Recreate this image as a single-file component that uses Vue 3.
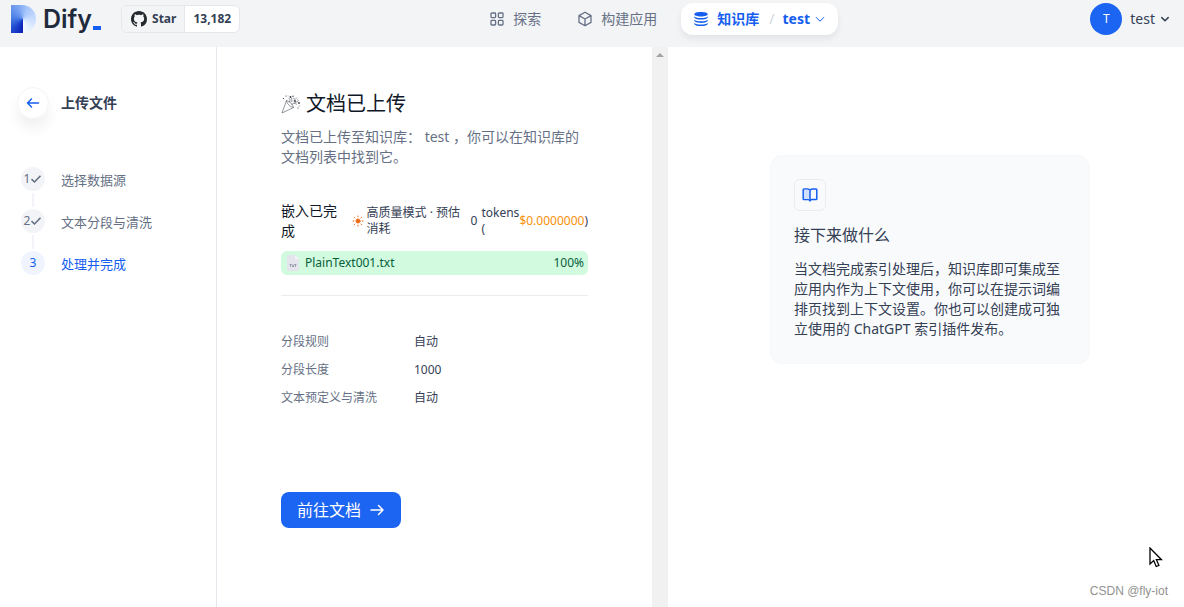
<script setup>
const steps = [
  { n: 1, label: '选择数据源', done: true },
  { n: 2, label: '文本分段与清洗', done: true },
  { n: 3, label: '处理并完成', done: false },
]
const rules = [
  { name: '分段规则', value: '自动' },
  { name: '分段长度', value: '1000' },
  { name: '文本预定义与清洗', value: '自动' },
]
</script>

<template>
  <div class="page">
    <header class="header">
      <div class="brand">
        <a class="logo" href="#" aria-label="Dify">
          <span class="logo-mark"></span>
          <span class="logo-text">Dify</span>
          <span class="logo-dash"></span>
        </a>
        <a class="github" href="#">
          <span class="gh-star">
            <svg width="16" height="16" viewBox="0 0 16 16" fill="#24292f"><path d="M8 0C3.58 0 0 3.58 0 8c0 3.54 2.29 6.53 5.47 7.59.4.07.55-.17.55-.38 0-.19-.01-.82-.01-1.49-2.01.37-2.53-.49-2.69-.94-.09-.23-.48-.94-.82-1.13-.28-.15-.68-.52-.01-.53.63-.01 1.08.58 1.23.82.72 1.21 1.87.87 2.33.66.07-.52.28-.87.51-1.07-1.78-.2-3.64-.89-3.64-3.95 0-.87.31-1.59.82-2.15-.08-.2-.36-1.02.08-2.12 0 0 .67-.21 2.2.82.64-.18 1.32-.27 2-.27s1.36.09 2 .27c1.53-1.04 2.2-.82 2.2-.82.44 1.1.16 1.92.08 2.12.51.56.82 1.27.82 2.15 0 3.07-1.87 3.75-3.65 3.95.29.25.54.73.54 1.48 0 1.07-.01 1.93-.01 2.2 0 .21.15.46.55.38A8.01 8.01 0 0 0 16 8c0-4.42-3.58-8-8-8z" /></svg>
            Star
          </span>
          <span class="gh-count">13,182</span>
        </a>
      </div>

      <nav class="nav">
        <a class="nav-item" href="#">
          <svg width="16" height="16" viewBox="0 0 16 16" fill="none" stroke="currentColor" stroke-width="1.3"><rect x="2" y="2" width="4.6" height="4.6" rx=".8" /><rect x="9.4" y="2" width="4.6" height="4.6" rx=".8" /><rect x="2" y="9.4" width="4.6" height="4.6" rx=".8" /><rect x="9.4" y="9.4" width="4.6" height="4.6" rx=".8" /></svg>
          探索
        </a>
        <a class="nav-item" href="#">
          <svg width="16" height="16" viewBox="0 0 16 16" fill="none" stroke="currentColor" stroke-width="1.3" stroke-linejoin="round"><path d="M8 1.2 14 4.6v6.8L8 14.8 2 11.4V4.6zM2 4.6 8 8l6-3.4M8 8v6.8" /></svg>
          构建应用
        </a>
        <div class="nav-active">
          <a class="nav-main" href="#">
            <svg width="16" height="16" viewBox="0 0 16 16" fill="currentColor"><path d="M8 1c3.900 0 6.700.9 6.700 2.200S11.900 5.400 8 5.400 1.300 4.500 1.300 3.200 4.100 1 8 1z" /><path d="M1.300 5.400C2.600 6.500 5.200 7 8 7s5.400-.5 6.700-1.600v.9C14.700 7.700 11.900 8.600 8 8.600S1.300 7.700 1.300 6.300z" /><path d="M1.300 8.700c1.300 1.100 3.900 1.600 6.700 1.600s5.400-.5 6.700-1.600v.9c0 1.400-2.800 2.300-6.700 2.300s-6.700-.9-6.700-2.300z" /><path d="M1.300 11.900c1.300 1.100 3.900 1.600 6.700 1.600s5.400-.5 6.700-1.600v.9c0 1.400-2.800 2.300-6.700 2.300s-6.700-.9-6.700-2.300z" /></svg>
            知识库
          </a>
          <span class="slash">/</span>
          <button class="nav-select" type="button">
            test
            <svg width="12" height="12" viewBox="0 0 12 12" fill="none" stroke="currentColor" stroke-width="1"><path d="m2 4.200 4 4 4-4" /></svg>
          </button>
        </div>
      </nav>

      <button class="account" type="button">
        <span class="avatar">T</span>
        test
        <svg width="12" height="12" viewBox="0 0 12 12" fill="none" stroke="currentColor" stroke-width="1.500" stroke-linecap="round" stroke-linejoin="round"><path d="m2.800 4.600 3.200 3.200 3.200-3.200" /></svg>
      </button>
    </header>

    <div class="body">
      <aside class="sidebar">
        <div class="side-head">
          <button class="back" type="button" aria-label="返回">
            <svg width="14" height="14" viewBox="0 0 14 14" fill="none" stroke="currentColor" stroke-width="1.500" stroke-linecap="round" stroke-linejoin="round"><path d="M12.500 7H1.500M5.500 3l-4 4 4 4" /></svg>
          </button>
          <h2>上传文件</h2>
        </div>
        <ol class="steps">
          <li v-for="s in steps" :key="s.n" :class="{ current: !s.done }">
            <span class="badge">{{ s.n }}<svg v-if="s.done" width="12" height="12" viewBox="0 0 12 12" fill="none" stroke="currentColor" stroke-width="1.600"><path d="M1.500 6.200 4.500 9l6-6.200" /></svg></span>
            <span class="step-label">{{ s.label }}</span>
          </li>
        </ol>
      </aside>

      <main class="content">
        <h1>
          <svg width="20" height="20" viewBox="0 0 20 20" fill="none" stroke="#4a505a" stroke-width=".6"><path d="M5.500 6.500 1 19l11.500-5.500c-.6-3-3.500-6.200-7-7zM5.500 6.500c.2 3 3.500 6.500 7 7M8 8.500c1.500-1.700 1.500-3-.3-4.500M10.500 11c1-2.200 3.500-2 5.500-.5M9 3c2 1 2.500 2.600 1.200 5M12 7.500l4-4M13 9l4-1.500" /><path d="m12 4 2 1m2 .5 2 1.500m-.5 5.500 1.500-1M7 1.500l1 1" stroke="#7a7d85" /><g fill="#343a42" stroke="none"><circle cx="2.500" cy="4.500" r=".6" /><circle cx="5" cy="2" r=".6" /><circle cx="12" cy="2.300" r=".7" /><circle cx="9.500" cy="3" r=".9" /><circle cx="18" cy="9" r=".9" /><circle cx="17" cy="14" r=".6" /><circle cx="14" cy="7" r=".9" /></g></svg>
          文档已上传
        </h1>
        <p class="desc">文档已上传至知识库： test ，你可以在知识库的文档列表中找到它。</p>

        <div class="status">
          <div class="status-title">嵌入已完成</div>
          <div class="cost">
            <svg width="12" height="12" viewBox="0 0 12 12" stroke="#f56b1c" stroke-width="1" stroke-linecap="round"><circle cx="6" cy="6" r="2" fill="#f56b1c" /><path d="M6 1v.8M6 10.200v.8M1 6h.8M10.200 6h.8M2.400 2.400l.6.6M9 9l.6.6M9.600 2.400 9 3M3 9l-.6.6" /></svg>
            <span class="mode">高质量模式 · 预估消耗</span>
            <span class="count">0</span>
            <span class="tokens">tokens (</span>
            <span class="price">$0.0000000</span>
            <span>)</span>
          </div>
        </div>

        <div class="file">
          <svg width="12" height="16" viewBox="0 0 12 16"><path d="M1.500 0H8l4 4v10.500a1.500 1.500 0 0 1-1.500 1.500h-9A1.500 1.500 0 0 1 0 14.500v-13A1.500 1.500 0 0 1 1.500 0z" fill="#e4e5ed" /><path d="M8 0v4h4z" fill="#f4f4fa" /><path d="M2.600 9.500h2M3.600 9.500v2.500M5.200 9.500l1.600 2.500M6.800 9.500 5.200 12M7.400 9.500h2M8.400 9.500v2.500" fill="none" stroke="#858ca0" stroke-width=".8" /></svg>
          <span class="file-name">PlainText001.txt</span>
          <span>100%</span>
        </div>

        <dl class="rules">
          <div v-for="r in rules" :key="r.name">
            <dt>{{ r.name }}</dt>
            <dd>{{ r.value }}</dd>
          </div>
        </dl>

        <button class="go" type="button">
          前往文档
          <svg width="16" height="16" viewBox="0 0 16 16" fill="none" stroke="currentColor" stroke-width="1.500" stroke-linecap="round" stroke-linejoin="round"><path d="M2 8h12M9.500 3.500 14 8l-4.500 4.500" /></svg>
        </button>
      </main>

      <div class="scrollbar"><span class="scroll-up"></span></div>

      <section class="aside">
        <article class="tip">
          <div class="tip-icon">
            <svg width="16" height="16" viewBox="0 0 16 16" fill="none" stroke="#155eef" stroke-width="1.500" stroke-linejoin="round"><path d="M8 3.500C7.600 2.500 6.800 2 5.500 2H2c-.5 0-.8.3-.8.8v9c0 .5.3.8.8.8h3.800c1.200 0 2.200.4 2.200 1.400 0-1 1-1.400 2.200-1.400H14c.5 0 .8-.3.800-.8v-9c0-.5-.3-.8-.8-.8h-3.500C9.200 2 8.400 2.500 8 3.500z" /><path d="M2 2.800h3.500C7 2.800 8 3.500 8 5v8c-.8-.8-1.500-1-2.500-1H2z" fill="#d1e0ff" stroke="none" /><path d="M8 3.500V14" /></svg>
          </div>
          <h3>接下来做什么</h3>
          <p>当文档完成索引处理后，知识库即可集成至应用内作为上下文使用，你可以在提示词编排页找到上下文设置。你也可以创建成可独立使用的 ChatGPT 索引插件发布。</p>
        </article>
      </section>
    </div>

    <svg class="cursor" width="14" height="21" viewBox="0 0 14 21"><path d="M1 1v16l3.700-3.400L7.200 19.500l2.700-1.200-2.500-5.600H12.500z" fill="#fff" stroke="#000" stroke-width="1.300" /></svg>
    <span class="watermark">CSDN @fly-iot</span>
  </div>
</template>

<style>
html,
body,
#app {
  height: 100%;
}
body {
  margin: 0;
  overflow: hidden;
}
</style>

<style scoped>
.page {
  position: relative;
  display: flex;
  flex-direction: column;
  height: 100%;
  background: #fff;
  color: #344054;
  font: 14px/20px "Noto Sans", "Noto Sans CJK SC", sans-serif;
}
.page * {
  box-sizing: border-box;
}
svg {
  display: block;
  flex: none;
}
h1, h2, h3, p, ol, dl, dd {
  margin: 0;
  padding: 0;
  font-weight: 400;
}
a {
  color: inherit;
  text-decoration: none;
}
button {
  padding: 0;
  border: 0;
  background: none;
  color: inherit;
  font: inherit;
}

.header {
  display: flex;
  flex: none;
  align-items: center;
  justify-content: space-between;
  height: 47px;
  padding: 0 13px 9px 11px;
  background: #f3f4f6;
}
.brand, .logo, .github, .gh-star, .nav, .nav-item, .nav-active, .nav-main, .nav-select, .account {
  display: flex;
  align-items: center;
}
.brand {
  gap: 20px;
}
.logo-mark {
  width: 25px;
  height: 28px;
  border-radius: 0 14px 14px 0;
  background: conic-gradient(from 180deg at 12px 14px, #0a1fb5, #1f49cf 45deg, #4579e4 90deg, #739ff0 150deg, #a5c5fb 200deg, #c9ddfd 270deg, #f5f9ff 355deg);
}
.logo-text {
  margin-left: 7px;
  color: #1f2a3d;
  font: 600 25px/28px Inter, sans-serif;
}
.logo-dash {
  align-self: flex-end;
  width: 8px;
  height: 4px;
  margin: 0 0 3px 1px;
  background: #155eef;
}
.github {
  height: 28px;
  border: 1px solid #e4e7ec;
  border-radius: 6px;
  background: #fff;
  font-size: 12px;
  font-weight: 700;
  overflow: hidden;
}
.gh-star {
  gap: 5px;
  height: 100%;
  padding: 0 8px 0 9px;
  border-right: 1px solid #e4e7ec;
  background: #f3f4f6;
}
.gh-count {
  padding: 0 8px;
}
.nav {
  margin-right: 15px;
  color: #667085;
}
.nav-item {
  gap: 8px;
  padding: 0 12px;
}
.nav-item + .nav-item {
  margin: 0 12px;
}
.nav-active {
  height: 32px;
  padding: 0 12px;
  border-radius: 12px;
  background: #fff;
  box-shadow: 0 4px 6px rgba(16, 24, 40, .07);
  color: #155eef;
  font-weight: 700;
}
.nav-main {
  gap: 8px;
}
.slash {
  margin: 0 8px 0 10px;
  color: #d0d5dd;
  font-weight: 400;
}
.nav-select {
  gap: 4px;
}
.account {
  gap: 8px;
}
.account svg {
  margin-left: -4px;
}
.avatar {
  width: 32px;
  border-radius: 50%;
  background: #1c64f2;
  color: #fff;
  font-size: 12px;
  line-height: 32px;
}

.body {
  display: flex;
  flex: 1;
  min-height: 0;
}
.sidebar {
  flex: none;
  width: 217px;
  padding: 40px 17px;
  border-right: 1px solid #e4e7ec;
}
.side-head {
  display: flex;
  align-items: center;
  gap: 12px;
}
.side-head h2 {
  font-size: 14px;
  font-weight: 700;
}
.back {
  display: grid;
  place-items: center;
  width: 32px;
  height: 32px;
  border: 1px solid #f2f4f7;
  border-radius: 50%;
  box-shadow: 0 10px 14px rgba(16, 24, 40, .06);
  color: #155eef;
}
.steps {
  margin: 48px 4px 0;
  list-style: none;
  color: #667085;
}
.steps li {
  display: flex;
  gap: 16px;
}
.steps li + li {
  margin-top: 18px;
}
.badge {
  position: relative;
  display: flex;
  align-items: center;
  justify-content: center;
  width: 24px;
  height: 24px;
  border-radius: 12px;
  background: #f2f4f7;
  font-size: 12px;
}
.steps li + li .badge::before {
  content: "";
  position: absolute;
  bottom: 26px;
  left: 11px;
  width: 2px;
  height: 14px;
  background: #f2f4f7;
}
.step-label {
  padding-top: 3px;
  font-size: 13px;
}
.current {
  color: #155eef;
}
.current .badge {
  background: #eff4ff;
}

.content {
  flex: 1;
  min-width: 0;
  padding: 43px 64px;
}
h1 {
  display: flex;
  align-items: center;
  gap: 5px;
  color: #101828;
  font-size: 20px;
  line-height: 28px;
}
.desc {
  margin-top: 9px;
  color: #667085;
}
.status {
  display: flex;
  align-items: center;
  justify-content: space-between;
  margin-top: 34px;
}
.status-title {
  width: 58px;
  color: #101828;
}
.cost {
  display: flex;
  align-items: center;
  font-size: 12px;
  line-height: 16px;
}
.mode {
  width: 96px;
  margin: 0 8px 0 3px;
}
.count {
  margin-right: 4px;
}
.tokens {
  width: 38px;
}
.price {
  color: #f79009;
}
.file {
  display: flex;
  align-items: center;
  height: 24px;
  margin-top: 10px;
  padding: 0 4px 0 6px;
  border-radius: 6px;
  background: #d1fadf;
  color: #05603a;
  font-size: 12px;
}
.file-name {
  flex: 1;
  margin-left: 6px;
}
.rules {
  margin-top: 20px;
  padding-top: 37px;
  border-top: 1px solid #eaecf0;
  font-size: 12px;
  line-height: 18px;
}
.rules div {
  display: flex;
  margin-bottom: 10px;
}
.rules dt {
  width: 133px;
  color: #667085;
}
.go {
  display: flex;
  align-items: center;
  gap: 8px;
  height: 36px;
  margin-top: 85px;
  padding: 0 16px;
  border-radius: 8px;
  background: #1c64f2;
  color: #fff;
  font-size: 16px;
}
.scrollbar {
  flex: none;
  width: 16px;
  padding-top: 6px;
  background: #f1f1f1;
}
.scroll-up {
  display: block;
  width: 0;
  margin: 0 auto;
  border: 4px solid transparent;
  border-top: 0;
  border-bottom-color: #a3a3a3;
}
.aside {
  flex: none;
  width: 516px;
  padding: 108px 0 0 102px;
}
.tip {
  width: 320px;
  padding: 23px 23px 24px;
  border: 1px solid #f6f8fa;
  border-radius: 12px;
  background: #f9fafc;
}
.tip-icon {
  display: grid;
  place-items: center;
  width: 32px;
  height: 32px;
  border: 1px solid #eaecf0;
  border-radius: 6px;
}
.tip h3 {
  margin: 12px 0;
  font-size: 16px;
  line-height: 24px;
}
.cursor {
  position: absolute;
  right: 21px;
  bottom: 39px;
}
.watermark {
  position: absolute;
  right: 16px;
  bottom: 6px;
  color: #929292;
  font: 12px/20px "Liberation Sans", sans-serif;
}
</style>
